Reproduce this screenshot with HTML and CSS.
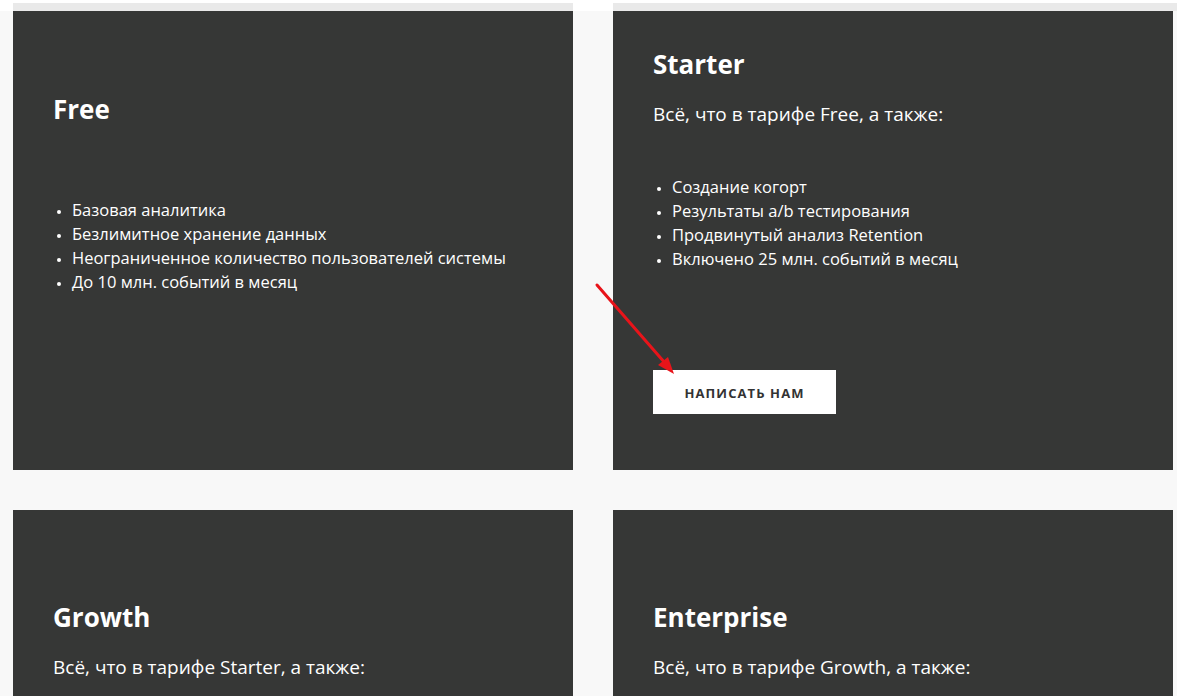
FILE: index.html
```html
<!DOCTYPE html>
<html lang="ru">
<head>
    <meta charset="UTF-8" />
    <meta name="viewport" content="width=device-width, initial-scale=1.0"/>
    <title>Тарифы</title>
    <link rel="stylesheet" href="styles.css">
</head>
<body>

<div class="top-strip">
    <div class="strip"></div>
    <div class="strip"></div>
</div>

<div class="plans">
    <div class="plan plan-free">
        <h2>Free</h2>
        <p class="lead"></p>
        <ul>
            <li>Базовая аналитика</li>
            <li>Безлимитное хранение данных</li>
            <li>Неограниченное количество пользователей системы</li>
            <li>До 10 млн. событий в месяц</li>
        </ul>
    </div>

    <div class="plan plan-starter">
        <h2>Starter</h2>
        <p class="lead">Всё, что в тарифе Free, а также:</p>
        <ul>
            <li>Создание когорт</li>
            <li>Результаты a/b тестирования</li>
            <li>Продвинутый анализ Retention</li>
            <li>Включено 25 млн. событий в месяц</li>
        </ul>
        <a class="btn" href="#">Написать нам</a>

        <!-- стрелка-пометка -->
        <svg class="arrow" width="100" height="110" viewBox="0 0 100 110">
            <line x1="12" y1="10" x2="80" y2="88" stroke="#e8141a" stroke-width="3" stroke-linecap="round"/>
            <polygon points="89,99 73,90 83,82" fill="#e8141a"/>
        </svg>
    </div>

    <div class="plan plan-growth">
        <h2>Growth</h2>
        <p class="lead">Всё, что в тарифе Starter, а также:</p>
    </div>

    <div class="plan plan-enterprise">
        <h2>Enterprise</h2>
        <p class="lead">Всё, что в тарифе Growth, а также:</p>
    </div>
</div>

</body>
</html>
```

FILE: styles.css
```css
html, body {
    margin: 0;
    background: #f8f8f8;
    font-family: "Open Sans", sans-serif;
    color: #fff;
}
.top-strip {
    display: grid;
    grid-template-columns: 560px 560px;
    column-gap: 40px;
    padding: 3px 0 0 13px;
    background: #fff;
}
.strip {
    height: 8px;
    background: #e9e9e9;
}
.strip:last-child {
    margin-right: -4px;
}
.plans {
    display: grid;
    grid-template-columns: 560px 560px;
    grid-auto-rows: 459px;
    gap: 40px;
    padding-left: 13px;
}
.plan {
    position: relative;
    background: #363736;
    padding: 0 40px;
}
.plan h2 {
    margin: 0;
    font-size: 26px;
    font-weight: 700;
    line-height: 30px;
}
.plan .lead {
    margin: 22px 0 0;
    font-size: 19px;
    line-height: 26px;
}
.plan ul {
    margin: 48px 0 0;
    padding-left: 19px;
    font-size: 16.5px;
    line-height: 24px;
}
.plan li::marker {
    font-size: 12px;
}
.plan-free {
    padding-top: 83px;
}
.plan-free .lead {
    margin-top: 0;
    height: 0;
}
.plan-free ul {
    margin-top: 74px;
}
.plan-starter {
    padding-top: 38px;
}
.plan-growth, .plan-enterprise {
    padding-top: 92px;
}
.btn {
    display: inline-block;
    margin-top: 99px;
    width: 183px;
    height: 44px;
    line-height: 46px;
    background: #fff;
    color: #333;
    text-align: center;
    text-decoration: none;
    text-transform: uppercase;
    font-size: 13px;
    font-weight: 700;
    letter-spacing: 1.1px;
}
.arrow {
    position: absolute;
    left: -28px;
    top: 264px;
}
```
